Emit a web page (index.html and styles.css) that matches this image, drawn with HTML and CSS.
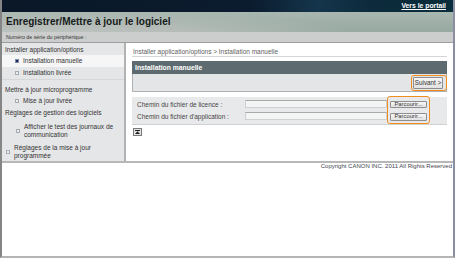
FILE: index.html
```html
<!DOCTYPE html>
<html>
<head>
<title>Enregistrer/Mettre à jour le logiciel</title>
<link rel="stylesheet" href="styles.css">
</head>
<body>

<div class="frame">
  <div class="topbar">
    <a class="portal" href="#">Vers le portail</a>
  </div>
  <div class="titlebar">
    <h1>Enregistrer/Mettre à jour le logiciel</h1>
  </div>
  <div class="serial">Numéro de série du périphérique :</div>

  <div class="layout">
    <!-- Left menu -->
    <nav class="nav">
      <div class="group first">
        <div class="nav-head">Installer application/options</div>
        <div class="nav-sub active"><span class="bullet"></span>Installation manuelle</div>
        <div class="nav-sub"><span class="bullet"></span>Installation livrée</div>
      </div>
      <div class="group">
        <div class="nav-head">Mettre à jour microprogramme</div>
        <div class="nav-sub"><span class="bullet"></span>Mise à jour livrée</div>
      </div>
      <div class="group">
        <div class="nav-head">Réglages de gestion des logiciels</div>
        <div class="nav-sub multi"><span class="bullet"></span><span>Afficher le test des journaux de<br>communication</span></div>
      </div>
      <div class="nav-sub multi top-level"><span class="bullet"></span><span>Réglages de la mise à jour<br>programmée</span></div>
    </nav>

    <!-- Main content -->
    <div class="main">
      <div class="breadcrumb">Installer application/options &gt; Installation manuelle</div>

      <div class="panel">
        <div class="panel-title">Installation manuelle</div>
        <div class="panel-actions">
          <span class="ring ring-next"><button class="btn btn-next">Suivant &gt;</button></span>
        </div>
      </div>

      <div class="form">
        <div class="fields">
          <div class="field-row">
            <label class="field-label">Chemin du fichier de licence :</label>
            <span class="field-input"></span>
          </div>
          <div class="field-row">
            <label class="field-label">Chemin du fichier d'application :</label>
            <span class="field-input"></span>
          </div>
        </div>
        <span class="ring ring-browse">
          <button class="btn btn-browse">Parcourir...</button>
          <button class="btn btn-browse">Parcourir...</button>
        </span>
      </div>

      <a class="to-top" href="#">
        <svg width="9" height="8" viewBox="0 0 9 8">
          <rect x="0.5" y="0.5" width="8" height="7" fill="#e2e2e2" stroke="#7a7a7a"/>
          <rect x="2" y="2" width="5" height="1" fill="#222"/>
          <polygon points="4.5,3.2 2,6 7,6" fill="#222"/>
        </svg>
      </a>
    </div>
  </div>

  <div class="copyright">Copyright CANON INC. 2011 All Rights Reserved</div>
</div>

</body>
</html>
```

FILE: styles.css
```css
body {
  margin: 0;
  background: #fff;
  font-family: "Liberation Sans", Arial, sans-serif;
}

/* Outer window frame */
.frame {
  box-sizing: border-box;
  width: 455px;
  height: 258px;
  border-left: 2px solid #858585;
  border-right: 2px solid #8a8ea0;
  border-bottom: 2px solid #b4b4b4;
  background: #fff;
}

/* Dark strip at the very top */
.topbar {
  height: 12px;
  display: flex;
  justify-content: flex-end;
  align-items: center;
  padding-right: 7px;
  background: linear-gradient(to right, #0a1828 0%, #0b1c2e 55%, #15354c 70%, #0c2a3b 82%, #0a2d3b 100%);
}

.portal {
  color: #fff;
  font-size: 6.8px;
  font-weight: bold;
  line-height: 8px;
  text-decoration: underline;
}

/* Grey-green title band */
.titlebar {
  height: 20px;
  display: flex;
  align-items: center;
  padding-left: 4px;
  background:
    radial-gradient(ellipse 330px 34px at 40px 30px, #c4c9c6 0%, #b5bcb8 55%, rgba(181,188,184,0) 100%),
    linear-gradient(to bottom, #a9b7b1, #97a9a1);
}

.titlebar h1 {
  margin: 0;
  font-size: 10px;
  line-height: 12px;
  color: #161a1a;
}

.serial {
  height: 10px;
  line-height: 10px;
  padding-left: 4px;
  font-size: 5.3px;
  color: #333;
  background: #cccecd;
  border-bottom: 1px solid #9c9e9e;
}

/* Two column area */
.layout {
  display: flex;
  height: 118px;
  border-bottom: 2px solid #b8b8b8;
}

.nav {
  width: 122px;
  padding-top: 1px;
  background: #e5e6e8;
  border-right: 2px solid #b2b2b2;
  font-size: 6.5px;
  color: #333;
}

.group.first {
  margin-bottom: 4px;
  border-bottom: 1px solid #d6d7da;
}

.nav-head {
  line-height: 11px;
  padding-left: 3px;
}

.nav-sub {
  display: flex;
  align-items: center;
  line-height: 12px;
  padding-left: 13px;
}

.nav-sub.active {
  background: #f6f6f7;
}

.bullet {
  box-sizing: border-box;
  width: 4px;
  height: 4px;
  margin-right: 4px;
  flex-shrink: 0;
  background: #eceef0;
  border: 1px solid #a6abb3;
}

.nav-sub.active .bullet {
  background: #1d2e5c;
  border-color: #7d8aa8;
}

.nav-sub.multi {
  line-height: 7.5px;
  padding-top: 5px;
  padding-left: 14px;
}

.nav-sub.top-level {
  padding-top: 6px;
  padding-left: 4px;
}

.nav-sub.top-level .bullet {
  margin-right: 4px;
}

/* Right column */
.main {
  flex: 1;
  padding: 5px 6px 0 6px;
  font-size: 6.5px;
}

.breadcrumb {
  line-height: 8px;
  padding-left: 1px;
  color: #5e5e5e;
  border-bottom: 1px solid #d6d6d6;
}

.panel {
  margin-top: 4px;
  border: 1px solid #aeb2b5;
  border-top: none;
}

.panel-title {
  height: 13px;
  line-height: 13px;
  padding-left: 3px;
  margin: 0 -1px;
  background: #5d6b70;
  color: #fff;
  font-size: 6.8px;
  font-weight: bold;
}

.panel-actions {
  height: 17px;
  display: flex;
  justify-content: flex-end;
  align-items: center;
  background: #e3e5e7;
}

/* Orange highlight rings */
.ring {
  box-sizing: border-box;
  border: 1.5px solid #f28c1e;
  border-radius: 3px;
}

.ring-next {
  display: flex;
  padding: 1px 3px 1px 1px;
  margin-right: -1px;
}

.btn {
  font-family: "Liberation Sans", Arial, sans-serif;
  font-size: 6.3px;
  color: #333;
  padding: 0;
  background: linear-gradient(to bottom, #f6f6f6, #e2e2e2);
  border: 1px solid #8e8e8e;
  border-radius: 1px;
}

.btn-next {
  width: 30px;
  height: 12px;
}

.form {
  display: flex;
  height: 27px;
  margin-top: 5px;
  padding-left: 5px;
  background: #e8e9ea;
  border-bottom: 1px solid #d0d0d0;
  color: #444;
}

.fields {
  padding-top: 1px;
}

.field-row {
  display: flex;
  align-items: center;
  height: 12px;
}

.field-label {
  width: 108px;
}

.field-input {
  box-sizing: border-box;
  width: 142px;
  height: 8px;
  margin-top: -1px;
  background: #f3f4f4;
  border: 1px solid #cfd0d0;
  border-top-color: #a8a8a8;
}

.ring-browse {
  display: flex;
  flex-direction: column;
  gap: 5px;
  height: 28px;
  margin-top: -1px;
  padding: 3.5px 1.5px 0 2px;
}

.btn-browse {
  width: 37px;
  height: 7.5px;
  line-height: 5px;
  font-size: 5.8px;
}

.to-top {
  display: block;
  width: 9px;
  height: 8px;
  margin-top: 3px;
  margin-left: 1px;
}

.to-top svg {
  display: block;
}

.copyright {
  text-align: right;
  padding-right: 1px;
  line-height: 7px;
  font-size: 6px;
  color: #45454f;
}
```
